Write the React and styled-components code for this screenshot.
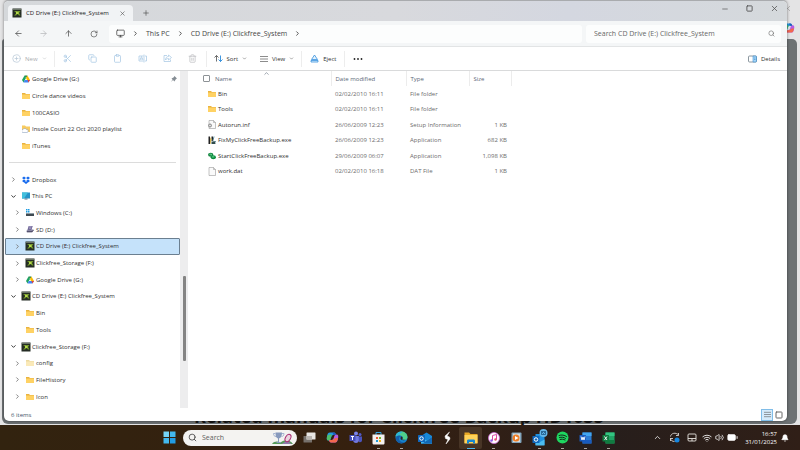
import React from "react";
import styled, { createGlobalStyle, css } from "styled-components";
import {
  ArrowLeft,
  ArrowRight,
  ArrowUp,
  Battery,
  Bell,
  ChevronDown,
  ChevronRight,
  ChevronUp,
  CirclePlus,
  Clipboard,
  Copy,
  Minus,
  Monitor,
  Plus,
  RotateCw,
  Scissors,
  Search,
  Square,
  Trash2,
  Volume2,
  Wifi,
  X,
} from "lucide-react";

const GlobalStyle = createGlobalStyle`
  * {
    box-sizing: border-box;
  }

  body {
    margin: 0;
    font-family: "Open Sans", "Noto Sans", sans-serif;
    font-size: 6px;
    line-height: 10px;
    color: #303030;
    overflow: hidden;
  }

  button,
  input {
    font: inherit;
    color: inherit;
    border: 0;
    margin: 0;
    padding: 0;
    background: none;
  }

  svg {
    display: block;
    flex: none;
  }
`;

const Screen = styled.div`
  min-height: 100vh;
  display: grid;
  grid-template-rows: 1fr 25px;
`;

const Desktop = styled.div`
  position: relative;
  display: flex;
  padding: 0 13px 4px 4px;
  background: #e4e4e5;
`;

const BackWindow = styled.div`
  position: absolute;
  inset: 39px 3px 1px 2px;
  background: #6d7274;
  border-radius: 3px 5px 6px 6px;
`;

const BackHeading = styled.h2`
  position: absolute;
  left: 194px;
  bottom: 3px;
  margin: 0;
  font-size: 18px;
  line-height: 12px;
  color: #151515;
  white-space: nowrap;
`;

const BackCopilot = styled.div`
  position: absolute;
  top: 22px;
  right: 5px;
`;

const BackClose = styled.div`
  position: absolute;
  top: 4px;
  right: 8px;
  color: #a5a5a5;
`;

const Explorer = styled.main`
  position: relative;
  flex: 1;
  display: flex;
  flex-direction: column;
  background: #fff;
  border-top: 1px solid #a9abae;
  border-radius: 5px;
  overflow: hidden;
  box-shadow: 0 0 3px rgba(0, 0, 0, 0.5);
`;

const TitleBar = styled.header`
  height: 20px;
  display: flex;
  justify-content: space-between;
  background: linear-gradient(90deg, #d5d8db, #d8d9dd 50%, #d4d7e0 72%, #d5d9dc);
`;

const Tabs = styled.div`
  display: flex;
  padding: 4px 0 0 4px;
`;

const Tab = styled.div`
  width: 125px;
  display: flex;
  align-items: center;
  gap: 5px;
  padding: 0 6px 0 5px;
  background: #f1f3f5;
  border-radius: 4px 4px 0 0;
  color: #222;

  button {
    margin-left: auto;
  }
`;

const IconButton = styled.button`
  width: ${(props) => props.$width || 25}px;
  display: flex;
  align-items: center;
  justify-content: center;
  color: ${(props) => props.$color || "#505050"};
`;

const WindowControls = styled.div`
  display: flex;
  height: 15px;
`;

const NavBar = styled.div`
  height: 26px;
  display: flex;
  align-items: center;
  padding: 0 6px 0 2px;
  background: #f4f6f7;
  border-bottom: 1px solid #e2e4e5;
  font-size: 7px;
`;

const Address = styled.nav`
  flex: 1;
  height: 18px;
  display: flex;
  align-items: center;
  gap: 7px;
  padding: 0 7px;
  margin: 0 4px 0 3px;
  background: #fcfdfd;
  border-radius: 3px;
  color: #444;
  white-space: nowrap;

  a {
    color: inherit;
    text-decoration: none;
  }
`;

const SearchBox = styled.label`
  width: 195px;
  height: 18px;
  display: flex;
  align-items: center;
  padding: 0 6px 0 8px;
  background: #fcfdfd;
  border-radius: 3px;
  color: #666;

  input {
    flex: 1;
    min-width: 0;
    outline: 0;
  }

  input::placeholder {
    color: #666;
    opacity: 1;
  }
`;

const CommandBar = styled.div`
  height: 24px;
  display: flex;
  align-items: center;
  padding: 0 7px 0 8px;
  border-bottom: 1px solid #d9dadb;
`;

const Command = styled.button`
  display: flex;
  align-items: center;
  gap: 4px;
  margin-left: ${(props) => props.$start || 0}px;
  color: ${(props) => (props.$muted ? "#a9acaf" : "#303030")};
`;

const Divider = styled.span`
  width: 1px;
  height: 16px;
  margin-left: ${(props) => props.$start}px;
  background: #ededed;
`;

const Spacer = styled.span`
  flex: 1;
`;

const Body = styled.div`
  flex: 1;
  display: flex;
  min-height: 0;
`;

const Sidebar = styled.aside`
  width: 184px;
  display: flex;
`;

const Tree = styled.ul`
  flex: 1;
  display: grid;
  grid-auto-rows: 1fr;
  list-style: none;
  margin: 0;
  padding: 0 0 3px 1px;

  li {
    display: flex;
    align-items: center;
  }

  hr {
    flex: 1;
    margin: 0 4px;
    border: 0;
    border-top: 1px solid #dcdcdc;
  }
`;

const TreeItem = styled.button`
  width: 100%;
  height: 100%;
  display: flex;
  align-items: center;
  gap: 2px;
  padding: 0 2px 0 ${(props) => (props.$nested ? 8 : 4)}px;
  border: 1px solid transparent;
  text-align: left;
  white-space: nowrap;
  ${(props) =>
    props.$selected &&
    css`
      background: #c5e2fa;
      border-color: #6b7f90;
      border-radius: 1px;
    `}
`;

const Toggle = styled.span`
  width: 10px;
  color: ${(props) => (props.$open ? "#222" : "#777")};
`;

const Track = styled.div`
  width: 8px;
  padding: 205px 2px 0 3px;
  background: #ededee;
`;

const Thumb = styled.div`
  height: 85px;
  border-radius: 1px;
  background: #848484;
`;

const Files = styled.section`
  flex: 1;
  padding-left: 12px;
`;

const FileTable = styled.table`
  width: 311px;
  height: 108px;
  table-layout: fixed;
  border-collapse: collapse;
  color: #6c6c6c;

  th,
  td {
    padding: 0 4px;
    text-align: left;
    white-space: nowrap;
  }

  th {
    height: 15px;
    font-weight: 400;
    color: #5c6978;
    border-right: 1px solid #ececec;
  }

  th:first-child {
    padding-left: 3px;
  }

  td:first-child {
    padding-left: 8px;
    color: #303030;
  }

  td:last-child {
    text-align: right;
  }
`;

const NameCell = styled.span`
  position: relative;
  display: flex;
  align-items: center;
  gap: ${(props) => props.$gap || 2}px;
`;

const SortMark = styled.span`
  position: absolute;
  top: -4px;
  left: 60px;
`;

const Tick = styled.input`
  appearance: none;
  width: 7px;
  height: 7px;
  border: 1px solid #8d9296;
  border-radius: 1px;
`;

const StatusBar = styled.footer`
  height: 13px;
  display: flex;
  align-items: center;
  padding: 0 2px 0 7px;
  color: #44546a;
`;

const ViewButton = styled.button`
  width: 12px;
  height: 12px;
  display: flex;
  align-items: center;
  justify-content: center;
  color: #666;
  border: 1px solid ${(props) => (props.$active ? "#80bde8" : "transparent")};
  background: ${(props) => (props.$active ? "#d5ebfb" : "none")};
`;

const Taskbar = styled.footer`
  position: relative;
  display: flex;
  align-items: center;
  padding: 0 8px 0 158px;
  background: linear-gradient(90deg, #32230f, #35200f 45%, #2f1f17 65%, #261e1c 74%, #301f17);
  color: #fff;
`;

const TaskSearch = styled.label`
  width: 114px;
  height: 16px;
  display: flex;
  align-items: center;
  gap: 5px;
  margin: 0 1px 0 2px;
  padding: 0 2px 0 5px;
  border-radius: 8px;
  background: #f4f3f1;
  color: #333;
  font-size: 7px;

  input {
    flex: 1;
    min-width: 0;
    outline: 0;
  }

  input::placeholder {
    color: #606060;
    opacity: 1;
  }
`;

const TaskButton = styled.button`
  position: relative;
  width: 23px;
  height: 22px;
  display: flex;
  align-items: center;
  justify-content: center;
  border-radius: 2px;
  background: ${(props) => (props.$active ? "#483526" : "none")};

  &::after {
    content: "";
    position: absolute;
    bottom: 0;
    width: ${(props) => (props.$active ? 8 : 3)}px;
    height: 1px;
    background: ${(props) => (props.$active ? "#4cb4ee" : "#aaa49e")};
    display: ${(props) => (props.$running ? "block" : "none")};
  }
`;

const Tray = styled.div`
  display: flex;
  align-items: center;
  margin-left: auto;
`;

const Clock = styled.time`
  width: 38px;
  line-height: 8px;
  text-align: right;
`;

const Folder = ({ pale }) => (
  <svg width="8" height="8" viewBox="0 0 16 16">
    <path d="M0 2h6l2 2h8v10H0z" fill={pale ? "#ecd9a0" : "#e9b33f"} />
    <path d="M0 5h16v9H0z" fill={pale ? "#fae9b8" : "#ffd264"} />
  </svg>
);

const CloudFolder = () => (
  <svg width="8" height="8" viewBox="0 0 16 16">
    <path d="M0 1h6l2 2h8v11H0z" fill="#f8cb60" />
    <path d="M2 15a3 3 0 0 1 0-6 4 4 0 0 1 7 0 3 3 0 0 1 1 6z" fill="#fff" stroke="#7b93b5" />
  </svg>
);

const GoogleDrive = () => (
  <svg width="8" height="8" viewBox="0 0 16 16">
    <path d="M5 1h6L8 6z" fill="#188038" />
    <path d="M5 1l3 5-5 9-3-5z" fill="#1ea362" />
    <path d="M11 1l5 9h-6L8 6z" fill="#fbbc04" />
    <path d="M5.500 10H16l-3 5H3z" fill="#4285f4" />
    <path d="M11 10h5l-3 5z" fill="#ea4335" />
  </svg>
);

const Dropbox = () => (
  <svg width="8" height="8" viewBox="0 0 16 16" fill="#1469ee">
    <path d="M4 1l4 3-4 3-4-3zM12 1l4 3-4 3-4-3zM4 7l4 3-4 3-4-3zM12 7l4 3-4 3-4-3zM8 11l4 2-4 3-4-3z" />
  </svg>
);

const ThisPc = () => (
  <svg width="8" height="8" viewBox="0 0 16 16">
    <path d="M0 1h16v12H0z" fill="#2593c8" />
    <path d="M0 1h12L4 13H0z" fill="#42bfdc" />
    <path d="M5 13h6v2H5z" fill="#537285" />
  </svg>
);

const WindowsDisk = () => (
  <svg width="8" height="8" viewBox="0 0 16 16">
    <path d="M0 0h3v3H0zM4 0h3v3H4zM0 4h3v3H0zM4 4h3v3H4z" fill="#1a9be2" />
    <path d="M0 9h16v5H0z" fill="#3e4a52" />
    <path d="M0 8h16v2H0z" fill="#8e9ba3" />
  </svg>
);

const SdCard = () => (
  <svg width="8" height="9" viewBox="0 0 18 18">
    <path d="M6 1h9l-3 10H3z" fill="#62588e" />
    <path d="M7 3h6M6 6h6" stroke="#d9d5ee" strokeWidth="1.500" />
    <path d="M1 12l4-3h12l-3 6H2z" fill="#8886a3" />
    <path d="M2 14h12l3-4" stroke="#3d3b57" strokeWidth="2" fill="none" />
  </svg>
);

const Clickfree = () => (
  <svg width="8" height="8" viewBox="0 0 16 16" overflow="visible">
    <path d="M-1-1h18v18H-1z" fill="#252c25" />
    <path d="M0 0h16v2H0z" fill="#6b7568" />
    <path d="M2 4l5 4-5 5h4l3-3 3 3h3l-3-5 3-4h-4L9 6 6 4z" fill="#719a28" />
    <path d="M6 5h5v5H6z" fill="#b5d84a" />
  </svg>
);

const Pin = () => (
  <svg width="6" height="6" viewBox="0 0 12 12" fill="#858d94">
    <path d="M7 0l5 5-2 1-2 3-1 2-3-3-4 4 3-5-2-2 4-2z" />
  </svg>
);

const Page = ({ gear }) => (
  <svg width="8" height="9" viewBox="0 0 16 18">
    <path d="M2 1h9l4 4v12H2z" fill="#fafafa" stroke="#888" />
    <path d="M11 1v4h4" fill="none" stroke="#888" />
    {gear && <circle cx="4" cy="11" r="3" fill="#ddd" stroke="#888" strokeWidth="2" />}
  </svg>
);

const FixTool = () => (
  <svg width="8" height="9" viewBox="0 0 16 18">
    <path d="M1 1h3v15H1zM7 1h3v9H7z" fill="#222" />
    <path d="M4 2l3 5-2 9H4z" fill="#dab951" />
    <path d="M12 1l-2 8 3 3 3-1" stroke="#5b8a9a" strokeWidth="2" fill="none" />
    <path d="M7 11h7l1 5H7z" fill="#304c4c" />
  </svg>
);

const StartBackup = () => (
  <svg width="8" height="8" viewBox="0 0 18 16">
    <ellipse cx="6" cy="5" rx="6" ry="4.500" fill="#14833f" />
    <ellipse cx="12" cy="11" rx="6" ry="4.500" fill="#0e8d40" />
    <path d="M3 4h5l-1 3M9 10h5" stroke="#6fe19a" strokeWidth="2" fill="none" />
  </svg>
);

const Rename = () => (
  <svg width="9" height="9" viewBox="0 0 18 18" fill="none" stroke="#a8c8e4" strokeWidth="1.500">
    <path d="M11 4H2v10h9M14 4h3v10h-3M12 1v16M4 12l3-7 3 7M5 10h4" />
  </svg>
);

const Share = () => (
  <svg width="9" height="9" viewBox="0 0 18 18" fill="none" stroke="#a8c8e4" strokeWidth="1.500">
    <path d="M8 3H2v12h13v-4M11 2l6 5-6 5V9c-3 0-5 1-6 3 0-4 2-7 6-7z" />
  </svg>
);

const SortArrows = () => (
  <svg width="9" height="9" viewBox="0 0 18 18" fill="none" strokeWidth="1.700">
    <path d="M5 15V3M1 7l4-4 4 4" stroke="#555" />
    <path d="M13 3v12M9 11l4 4 4-4" stroke="#1c83d8" />
  </svg>
);

const Lines = ({ size = 8 }) => (
  <svg width={size} height={size} viewBox="0 0 16 16" stroke="#666" strokeWidth="1.500">
    <path d="M0 3h16M0 8h16M0 13h16" />
  </svg>
);

const Eject = () => (
  <svg width="9" height="9" viewBox="0 0 18 18" fill="#e3f2fd" stroke="#2b8bdc" strokeWidth="1.500">
    <path d="M9 2l6 9H3zM2 13h14v3H2z" />
  </svg>
);

const Dots = () => (
  <svg width="10" height="4" viewBox="0 0 20 8" fill="#222">
    <circle cx="3" cy="4" r="1.800" />
    <circle cx="10" cy="4" r="1.800" />
    <circle cx="17" cy="4" r="1.800" />
  </svg>
);

const DetailsPane = () => (
  <svg width="9" height="8" viewBox="0 0 18 16">
    <rect x="1" y="2" width="16" height="12" rx="2" fill="#fff" stroke="#667580" strokeWidth="1.500" />
    <path d="M10 2h5a2 2 0 0 1 2 2v8a2 2 0 0 1-2 2h-5z" fill="#a8d5f5" stroke="#2583cd" />
    <path d="M12 6h3M12 9h3" stroke="#2583cd" />
  </svg>
);

const Start = () => (
  <svg width="13" height="13" viewBox="0 0 26 26" fill="#43b9f0">
    <path d="M1 1h11v11H1z" fill="#75d5f8" />
    <path d="M14 1h11v11H14zM1 14h11v11H1z" />
    <path d="M14 14h11v11H14z" fill="#229de5" />
  </svg>
);

const SearchArt = () => (
  <svg width="24" height="15" viewBox="0 0 48 30">
    <path d="M2 28c4-6 12-6 17-3 8-6 18-7 25 3z" fill="#579c59" />
    <path d="M24 26c7-4 12-3 17 2H22z" fill="#8e7cab" />
    <path d="M9 5h13c0 7-2 11-6 12v7h4v2h-9v-2h3v-7c-4-1-5-5-5-12z" fill="#8799bd" />
    <path d="M9 7H5c0 4 2 6 5 6M22 7h4c0 4-2 6-5 6" fill="none" stroke="#a4b3d1" strokeWidth="2" />
    <ellipse cx="34" cy="16" rx="5" ry="8" transform="rotate(30 34 16)" fill="#ead4df" stroke="#a92a70" strokeWidth="2" />
  </svg>
);

const TaskView = () => (
  <svg width="13" height="13" viewBox="0 0 26 26">
    <rect x="1" y="10" width="17" height="13" rx="1" fill="#77716c" />
    <rect x="7" y="3" width="18" height="14" rx="1" fill="#e8e5e2" />
    <path d="M7 10h11v7H7z" fill="#b9b4b0" />
  </svg>
);

const Copilot = ({ size = 13 }) => (
  <svg width={size} height={size} viewBox="0 0 26 26">
    <path d="M8 3h8c3 0 3 2 4 5h-5c-3 0-4 2-5 6l-2 5H5c-4 0-4-4-3-8 1-5 2-8 6-8z" fill="#229ae3" />
    <path d="M2 12c0-3 2-5 6-5h4L8 19H5c-3 0-4-3-3-7z" fill="#4fbd68" />
    <path d="M18 23h-8c-3 0-3-2-4-5h5c3 0 4-2 5-6l2-5h3c4 0 4 4 3 8-1 5-2 8-6 8z" fill="#b75be0" />
    <path d="M24 14c-1 5-3 9-6 9h-8c-2 0-3-2-4-5h5c5 0 5-3 8-4z" fill="#f2684e" />
    <path d="M13 3h3c3 0 3 2 4 5h-5z" fill="#205bbd" />
  </svg>
);

const Teams = () => (
  <svg width="13" height="13" viewBox="0 0 26 26">
    <circle cx="14" cy="5" r="4" fill="#7b83eb" />
    <circle cx="22" cy="7" r="3" fill="#5059c9" />
    <path d="M8 10h12v8c0 8-12 8-12 0z" fill="#7078de" />
    <path d="M19 11h7v7c0 4-3 5-6 4z" fill="#4b53bc" />
    <path d="M1 8h12v12H1z" fill="#464eb8" />
    <path d="M4 11h6M7 11v7" stroke="#fff" strokeWidth="2" />
  </svg>
);

const Store = () => (
  <svg width="13" height="14" viewBox="0 0 26 28">
    <path d="M8 8V3h10v5" fill="none" stroke="#33a4df" strokeWidth="2" />
    <path d="M1 7h24v17c0 2-1 3-3 3H4c-2 0-3-1-3-3z" fill="#f3f1ef" />
    <path d="M8 12h4v4H8z" fill="#ed5b32" />
    <path d="M14 12h4v4h-4z" fill="#76b82a" />
    <path d="M8 18h4v4H8z" fill="#219bd8" />
    <path d="M14 18h4v4h-4z" fill="#f5b61d" />
  </svg>
);

const Edge = () => (
  <svg width="13" height="13" viewBox="0 0 26 26">
    <circle cx="13" cy="13" r="12" fill="#1683cc" />
    <path d="M1 11C3-3 24-2 25 12c0 5-5 7-10 5 2-3 1-7-4-8-5 0-8 0-10 2z" fill="#4fcf8c" />
    <path d="M1 11C2 3 9 0 15 2c-4 2-6 4-6 7-4 0-6 0-8 2z" fill="#2cb4da" />
    <path d="M10 11c-5 5 0 13 8 11 2 0 4-1 5-3-6 8-19 7-21-2-1-8 7-10 11-6-1 0-2 0-3 0z" fill="#145ea8" />
    <path d="M12 11c4 0 4 4 2 6 3 1 6 1 8-1-3 4-11 3-11-2z" fill="#32251b" />
  </svg>
);

const Outlook = () => (
  <svg width="14" height="12" viewBox="0 0 28 24">
    <path d="M6 8L17 1l11 7v15H6z" fill="#1788d7" />
    <path d="M6 10l11 7 11-7v13H6z" fill="#42b8ef" />
    <path d="M28 10v13H9z" fill="#1268b5" />
    <rect x="0" y="6" width="14" height="14" rx="1" fill="#1068bd" />
    <circle cx="7" cy="13" r="3.500" fill="none" stroke="#fff" strokeWidth="2" />
  </svg>
);

const OutlookMail = () => (
  <svg width="16" height="18" viewBox="0 0 32 36">
    <path d="M7 10h18v22H7z" fill="#1f8fdd" />
    <path d="M7 21l9 5 9-5v12H7z" fill="#4cbcf0" />
    <rect x="1" y="14" width="14" height="14" rx="1" fill="#1068bd" />
    <circle cx="8" cy="21" r="3.500" fill="none" stroke="#fff" strokeWidth="2" />
    <circle cx="23" cy="8" r="8" fill="#66b7e8" />
    <path d="M19 5h8v6h-8zM19 5l4 4 4-4" fill="none" stroke="#174f7c" strokeWidth="1.500" />
  </svg>
);

const Slash = () => (
  <svg width="13" height="14" viewBox="0 0 26 28">
    <path d="M17 2L8 10l1 5 5 2-4 9 8-10-1-4-5-2z" fill="#fff" stroke="#fff" />
  </svg>
);

const ExplorerIcon = () => (
  <svg width="14" height="14" viewBox="0 0 28 28">
    <path d="M1 3h9l3 3h14v18H1z" fill="#e9a925" />
    <path d="M1 8h26v17H1z" fill="#ffd35a" />
    <path d="M6 25v-5c0-2 1-3 3-3h10c2 0 3 1 3 3v5h-4v-3h-8v3z" fill="#1687d2" />
  </svg>
);

const ITunes = () => (
  <svg width="12" height="12" viewBox="0 0 24 24">
    <circle cx="12" cy="12" r="11" fill="#fff" stroke="#d66be0" strokeWidth="1.500" />
    <path d="M9 17V7l8-2v10" fill="none" stroke="#d949a5" strokeWidth="2" />
    <circle cx="7" cy="17" r="2.500" fill="#8a5de8" />
    <circle cx="15" cy="15" r="2.500" fill="#ee4b70" />
  </svg>
);

const MediaPlayer = () => (
  <svg width="11" height="12" viewBox="0 0 22 24">
    <rect x="1" y="1" width="20" height="21" rx="2" fill="#83a6bd" />
    <rect x="4" y="3" width="14" height="17" fill="#d4dadd" />
    <circle cx="10" cy="12" r="7" fill="#ee7e27" />
    <path d="M8 8l7 4-7 4z" fill="#fff" />
  </svg>
);

const Spotify = () => (
  <svg width="13" height="13" viewBox="0 0 26 26">
    <circle cx="13" cy="13" r="12" fill="#1ed760" />
    <path d="M6 9c5-2 11-1 15 2M7 13c4-1 9-1 12 2M8 17c3-1 7-1 10 1" fill="none" stroke="#17251b" strokeWidth="2" strokeLinecap="round" />
  </svg>
);

const Office = ({ dark, mid, light, mark }) => (
  <svg width="13" height="12" viewBox="0 0 26 24">
    <path d="M7 1h18v22H7z" fill={mid} />
    <path d="M7 1h18v7H7z" fill={light} />
    <path d="M7 16h18v7H7z" fill={dark} />
    <rect x="1" y="6" width="13" height="13" rx="1" fill={dark} />
    <path d={mark} fill="none" stroke="#fff" strokeWidth="1.800" />
  </svg>
);

const Sync = () => (
  <svg width="11" height="11" viewBox="0 0 22 22" fill="none" stroke="#d8d3cf" strokeWidth="1.800">
    <path d="M3 9c1-7 11-9 16-3M19 2v5h-5M3 12c0 5 4 7 8 7M3 18v-5h5" />
    <circle cx="16" cy="16" r="5" fill="#1686df" stroke="none" />
  </svg>
);

const Touchpad = () => (
  <svg width="10" height="9" viewBox="0 0 20 18" fill="none" stroke="#e8e4e0" strokeWidth="1.800">
    <rect x="2" y="2" width="16" height="14" rx="2" />
    <path d="M2 11h16M10 11v5" />
  </svg>
);

const quickAccess = [
  { name: "Google Drive (G:)", icon: <GoogleDrive />, pinned: true },
  { name: "Circle dance videos", icon: <Folder /> },
  { name: "100CASIO", icon: <Folder /> },
  { name: "Insole Court 22 Oct 2020 playlist", icon: <CloudFolder /> },
  { name: "iTunes", icon: <Folder /> },
];

const places = [
  { name: "Dropbox", icon: <Dropbox />, toggle: "closed" },
  { name: "This PC", icon: <ThisPc />, toggle: "open" },
  { name: "Windows (C:)", icon: <WindowsDisk />, toggle: "closed", nested: true },
  { name: "SD (D:)", icon: <SdCard />, toggle: "closed", nested: true },
  { name: "CD Drive (E:) Clickfree_System", icon: <Clickfree />, toggle: "closed", nested: true, selected: true },
  { name: "Clickfree_Storage (F:)", icon: <Clickfree />, toggle: "closed", nested: true },
  { name: "Google Drive (G:)", icon: <GoogleDrive />, toggle: "closed", nested: true },
  { name: "CD Drive (E:) Clickfree_System", icon: <Clickfree />, toggle: "open" },
  { name: "Bin", icon: <Folder />, nested: true },
  { name: "Tools", icon: <Folder />, nested: true },
  { name: "Clickfree_Storage (F:)", icon: <Clickfree />, toggle: "open" },
  { name: "config", icon: <Folder pale />, toggle: "closed", nested: true },
  { name: "FileHistory", icon: <Folder />, toggle: "closed", nested: true },
  { name: "Icon", icon: <Folder />, toggle: "closed", nested: true },
];

const files = [
  { name: "Bin", icon: <Folder />, date: "02/02/2010 16:11", type: "File folder", size: "" },
  { name: "Tools", icon: <Folder />, date: "02/02/2010 16:11", type: "File folder", size: "" },
  { name: "Autorun.inf", icon: <Page gear />, date: "26/06/2009 12:23", type: "Setup Information", size: "1 KB" },
  { name: "FixMyClickFreeBackup.exe", icon: <FixTool />, date: "26/06/2009 12:23", type: "Application", size: "682 KB" },
  { name: "StartClickFreeBackup.exe", icon: <StartBackup />, date: "29/06/2009 06:07", type: "Application", size: "1,098 KB" },
  { name: "work.dat", icon: <Page />, date: "02/02/2010 16:18", type: "DAT File", size: "1 KB" },
];

const apps = [
  { name: "Task View", icon: <TaskView /> },
  { name: "Copilot", icon: <Copilot /> },
  { name: "Teams", icon: <Teams /> },
  { name: "Store", icon: <Store />, running: true },
  { name: "Edge", icon: <Edge />, running: true },
  { name: "Mail", icon: <Outlook /> },
  { name: "Shortcut", icon: <Slash /> },
  { name: "File Explorer", icon: <ExplorerIcon />, running: true, active: true },
  { name: "iTunes", icon: <ITunes />, running: true },
  { name: "Media Player", icon: <MediaPlayer /> },
  { name: "Outlook", icon: <OutlookMail />, running: true },
  { name: "Spotify", icon: <Spotify />, running: true },
  {
    name: "Word",
    icon: <Office dark="#185abd" mid="#2b7cd3" light="#41a5ee" mark="M4 9l2 7 2-6 2 6 2-7" />,
    running: true,
  },
  {
    name: "Excel",
    icon: <Office dark="#107c41" mid="#21a366" light="#33c481" mark="M5 9l5 7M10 9l-5 7" />,
    running: true,
  },
];

function TreeRow({ item }) {
  return (
    <li>
      <TreeItem $nested={item.nested} $selected={item.selected}>
        <Toggle $open={item.toggle === "open"}>
          {item.toggle === "open" && <ChevronDown size={7} strokeWidth={3} />}
          {item.toggle === "closed" && <ChevronRight size={7} strokeWidth={3} />}
        </Toggle>
        {item.icon}
        {item.name}
        {item.pinned && (
          <>
            <Spacer />
            <Pin />
          </>
        )}
      </TreeItem>
    </li>
  );
}

function App() {
  return (
    <>
      <GlobalStyle />
      <Screen>
        <Desktop>
          <BackWindow />
          <BackHeading>Related manuals for Clickfree Backup HD1035</BackHeading>
          <BackClose>
            <X size={9} />
          </BackClose>
          <BackCopilot>
            <Copilot size={12} />
          </BackCopilot>
          <Explorer>
            <TitleBar>
              <Tabs>
                <Tab>
                  <Clickfree />
                  CD Drive (E:) Clickfree_System
                  <IconButton $width={9} aria-label="Close tab">
                    <X size={7} />
                  </IconButton>
                </Tab>
                <IconButton aria-label="New tab">
                  <Plus size={8} />
                </IconButton>
              </Tabs>
              <WindowControls>
                <IconButton aria-label="Minimise">
                  <Minus size={8} />
                </IconButton>
                <IconButton aria-label="Maximise">
                  <Square size={7} strokeWidth={3} />
                </IconButton>
                <IconButton aria-label="Close">
                  <X size={9} />
                </IconButton>
              </WindowControls>
            </TitleBar>
            <NavBar>
              <IconButton aria-label="Back">
                <ArrowLeft size={9} />
              </IconButton>
              <IconButton $color="#b8babc" aria-label="Forward">
                <ArrowRight size={9} />
              </IconButton>
              <IconButton aria-label="Up">
                <ArrowUp size={9} />
              </IconButton>
              <IconButton aria-label="Refresh">
                <RotateCw size={8} />
              </IconButton>
              <Address>
                <Monitor size={9} />
                <ChevronRight size={7} strokeWidth={3} />
                <a href="#pc">This PC</a>
                <ChevronRight size={7} strokeWidth={3} />
                <a href="#drive">CD Drive (E:) Clickfree_System</a>
                <ChevronRight size={7} strokeWidth={3} />
              </Address>
              <SearchBox>
                <input aria-label="Search drive" placeholder="Search CD Drive (E:) Clickfree_System" />
                <Search size={7} />
              </SearchBox>
            </NavBar>
            <CommandBar>
              <Command $muted>
                <CirclePlus size={9} color="#b9cad8" />
                New
                <ChevronDown size={5} />
              </Command>
              <Divider $start={7} />
              <IconButton $color="#a8c8e4" aria-label="Cut">
                <Scissors size={9} />
              </IconButton>
              <IconButton $color="#a8c8e4" aria-label="Copy">
                <Copy size={9} />
              </IconButton>
              <IconButton $color="#a8c8e4" aria-label="Paste">
                <Clipboard size={9} />
              </IconButton>
              <IconButton aria-label="Rename">
                <Rename />
              </IconButton>
              <IconButton aria-label="Share">
                <Share />
              </IconButton>
              <IconButton $color="#bdbfc1" aria-label="Delete">
                <Trash2 size={9} />
              </IconButton>
              <Divider $start={1} />
              <Command $start={7}>
                <SortArrows />
                Sort
                <ChevronDown size={5} />
              </Command>
              <Command $start={13}>
                <Lines />
                View
                <ChevronDown size={5} />
              </Command>
              <Divider $start={7} />
              <Command $start={8}>
                <Eject />
                Eject
              </Command>
              <Divider $start={8} />
              <Command $start={8} aria-label="See more">
                <Dots />
              </Command>
              <Spacer />
              <Command>
                <DetailsPane />
                Details
              </Command>
            </CommandBar>
            <Body>
              <Sidebar>
                <Tree>
                  {quickAccess.map((item) => (
                    <TreeRow key={item.name} item={item} />
                  ))}
                  <li>
                    <hr />
                  </li>
                  {places.map((item, index) => (
                    <TreeRow key={index} item={item} />
                  ))}
                </Tree>
                <Track>
                  <Thumb />
                </Track>
              </Sidebar>
              <Files>
                <FileTable>
                  <colgroup>
                    <col width="131" />
                    <col width="75" />
                    <col width="63" />
                    <col width="42" />
                  </colgroup>
                  <thead>
                    <tr>
                      <th>
                        <NameCell $gap={5}>
                          <Tick type="checkbox" aria-label="Select all" />
                          Name
                          <SortMark>
                            <ChevronUp size={7} />
                          </SortMark>
                        </NameCell>
                      </th>
                      <th>Date modified</th>
                      <th>Type</th>
                      <th>Size</th>
                    </tr>
                  </thead>
                  <tbody>
                    {files.map((file) => (
                      <tr key={file.name}>
                        <td>
                          <NameCell>
                            {file.icon}
                            {file.name}
                          </NameCell>
                        </td>
                        <td>{file.date}</td>
                        <td>{file.type}</td>
                        <td>{file.size}</td>
                      </tr>
                    ))}
                  </tbody>
                </FileTable>
              </Files>
            </Body>
            <StatusBar>
              6 items
              <Spacer />
              <ViewButton $active aria-label="Details view">
                <Lines size={7} />
              </ViewButton>
              <ViewButton aria-label="Large icons view">
                <Square size={8} strokeWidth={3} strokeLinejoin="miter" rx="0" />
              </ViewButton>
            </StatusBar>
          </Explorer>
        </Desktop>
        <Taskbar>
          <TaskButton aria-label="Start">
            <Start />
          </TaskButton>
          <TaskSearch>
            <Search size={9} />
            <input aria-label="Search" placeholder="Search" />
            <SearchArt />
          </TaskSearch>
          {apps.map((app) => (
            <TaskButton key={app.name} $running={app.running} $active={app.active} aria-label={app.name}>
              {app.icon}
            </TaskButton>
          ))}
          <Tray>
            <IconButton $width={17} $color="#fff" aria-label="Show hidden icons">
              <ChevronUp size={9} />
            </IconButton>
            <IconButton $width={17} aria-label="Sync">
              <Sync />
            </IconButton>
            <IconButton $width={17} aria-label="Touchpad">
              <Touchpad />
            </IconButton>
            <IconButton $width={13} $color="#fff" aria-label="Network">
              <Wifi size={10} />
            </IconButton>
            <IconButton $width={13} $color="#fff" aria-label="Volume">
              <Volume2 size={9} />
            </IconButton>
            <IconButton $width={13} $color="#fff" aria-label="Battery">
              <Battery size={11} fill="#fff" />
            </IconButton>
            <Clock>
              16:57
              <br />
              31/01/2025
            </Clock>
            <IconButton $width={15} $color="#fff" aria-label="Notifications">
              <Bell size={8} fill="#fff" />
            </IconButton>
          </Tray>
        </Taskbar>
      </Screen>
    </>
  );
}

export default App;
